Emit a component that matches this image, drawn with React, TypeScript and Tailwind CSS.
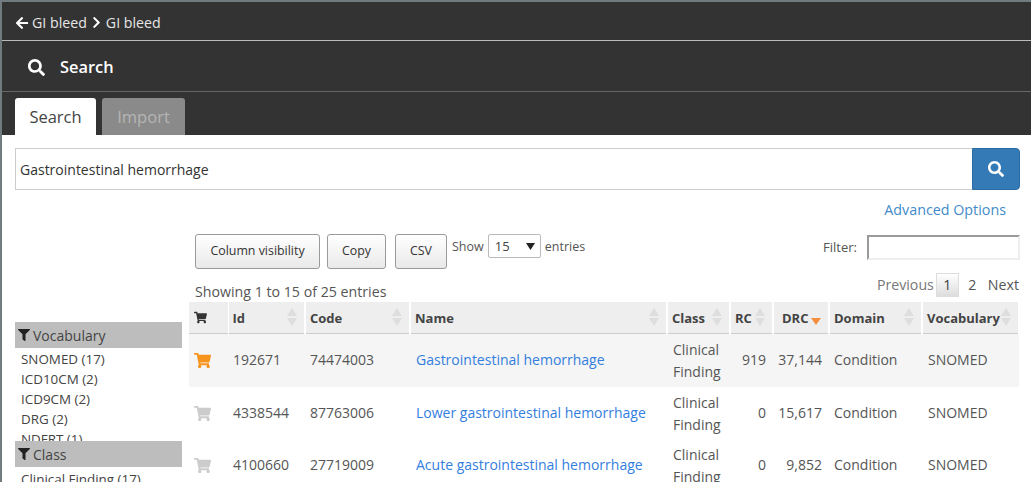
import { FaArrowLeft, FaChevronRight, FaSearch, FaFilter, FaShoppingCart } from "react-icons/fa";

function SortArrows({ active }: { active?: boolean }) {
  if (active)
    return (
      <svg width="10" height="7" viewBox="0 0 10 7" className="absolute right-[7px] top-[16px]">
        <path d="M0 0h10L5 7z" fill="#f58d3c" />
      </svg>
    );
  return (
    <svg width="10" height="18" viewBox="0 0 10 18" className="absolute right-[7px] top-[6px]">
      <path d="M5 0l5 8H0z" fill="#dedede" />
      <path d="M5 18L0 10h10z" fill="#dedede" />
    </svg>
  );
}

const cols = [
  { label: "Id", w: "w-[77px]", pad: "pl-[4px]" },
  { label: "Code", w: "w-[105px]", pad: "pl-[4px]" },
  { label: "Name", w: "w-[257px]", pad: "pl-[4px]" },
  { label: "Class", w: "w-[63px]", pad: "pl-[4px]" },
  { label: "RC", w: "w-[43px]", pad: "pl-[4px]" },
  { label: "DRC", w: "w-[56px]", pad: "pl-[8px]", active: true },
  { label: "Domain", w: "w-[93px]", pad: "pl-[4px]" },
  { label: "Vocabulary", w: "w-[97px]", pad: "pl-[4px]" },
];

const rows = [
  { id: "192671", code: "74474003", name: "Gastrointestinal hemorrhage", rc: "919", drc: "37,144", on: true, h: "h-[54px]" },
  { id: "4338544", code: "87763006", name: "Lower gastrointestinal hemorrhage", rc: "0", drc: "15,617", on: false, h: "h-[52px]" },
  { id: "4100660", code: "27719009", name: "Acute gastrointestinal hemorrhage", rc: "0", drc: "9,852", on: false, h: "h-[52px]" },
];

function Btn({ children, w }: { children: string; w: string }) {
  return (
    <button className={`${w} h-[35px] border border-[#9a9a9a] rounded-[3px] bg-gradient-to-b from-white to-[#e9e9e9] text-[12.4px] text-[#333]`}>
      {children}
    </button>
  );
}

export default function App() {
  return (
    <div
      className="w-[1031px] h-[482px] overflow-hidden bg-white border-l-2 border-t-2 border-[#6f7b7f] text-[#333] text-[14px]"
      style={{ fontFamily: '"Open Sans", sans-serif' }}
    >
      <header className="bg-[#333] text-[#e6e6e6]">
        <div className="h-[35px] flex items-center pl-[13px] pt-[3px] gap-[3px] text-[14.2px] border-b border-[#bbb] box-content">
          <FaArrowLeft className="text-white text-[14px]" />
          <span>GI bleed</span>
          <FaChevronRight className="text-white text-[13px]" />
          <span>GI bleed</span>
        </div>
        <div className="h-[51px] flex items-center pl-[26px] pt-[2px] gap-[15px] border-b border-[#666] text-white font-semibold text-[16.400px]">
          <FaSearch className="text-[17px]" />
          <span>Search</span>
        </div>
        <div className="h-[43px] flex items-end pl-[13px] gap-[6px] text-[16.500px]">
          <div className="w-[81px] h-[37px] pt-[1px] bg-white text-[#444] rounded-t-[3px] flex items-center justify-center">Search</div>
          <div className="w-[83px] h-[37px] pt-[1px] bg-[#8a8a8a] text-[#b5b5b5] rounded-t-[3px] flex items-center justify-center">Import</div>
        </div>
      </header>

      <div className="pl-[13px] pr-[11px] pt-[13px]">
        <div className="flex h-[42px]">
          <div className="flex-1 border border-[#ccc] border-r-0 flex items-center pl-[4px] text-[14px] text-[#333]">
            Gastrointestinal hemorrhage
          </div>
          <div className="w-[48px] bg-[#337ab7] rounded-r-[4px] border border-[#2e6da4] flex items-center justify-center text-white text-[16px]">
            <FaSearch />
          </div>
        </div>
        <div className="text-right pr-[14px] pt-[10px] h-[44px] text-[#428bca] text-[14.300px] leading-[20px]">Advanced Options</div>
      </div>

      <div className="flex pl-[13px]">
        <aside className="w-[167px] pt-[88px] shrink-0">
          <div className="h-[26px] bg-[#bdbdbd] flex items-center pl-[3px] gap-[3px] text-[14px] text-[#444]">
            <FaFilter className="text-[12px] text-[#222]" />
            Vocabulary
          </div>
          <ul className="h-[93px] overflow-hidden pl-[6px] pt-[1px] text-[13.400px] leading-[20px] text-[#444]">
            <li>SNOMED (17)</li>
            <li>ICD10CM (2)</li>
            <li>ICD9CM (2)</li>
            <li>DRG (2)</li>
            <li>NDFRT (1)</li>
          </ul>
          <div className="h-[26px] bg-[#bdbdbd] flex items-center pl-[3px] gap-[3px] text-[14px] text-[#444]">
            <FaFilter className="text-[12px] text-[#222]" />
            Class
          </div>
          <ul className="pl-[6px] pt-[2px] text-[13.400px] leading-[20px] text-[#444]">
            <li>Clinical Finding (17)</li>
          </ul>
        </aside>

        <main className="ml-[7px] w-[830px] shrink-0">
          <div className="flex h-[35px] pl-[6px]">
            <div className="flex">
              <Btn w="w-[125px]">Column visibility</Btn>
              <div className="w-[7px]" />
              <Btn w="w-[59px]">Copy</Btn>
              <div className="w-[9px]" />
              <Btn w="w-[52px]">CSV</Btn>
            </div>
            <div className="flex items-start gap-[4px] pl-[5px] text-[12.500px] text-[#555] leading-[24px]">
              <span className="pt-[1px]">Show</span>
              <div className="w-[53px] h-[24px] border border-[#bbb] rounded-[2px] flex items-center justify-between pl-[6px] pr-[5px] text-[#444] text-[13px]">
                <span>15</span>
                <svg width="9" height="7" viewBox="0 0 9 7"><path d="M0 0h9L4.500 7z" fill="#222" /></svg>
              </div>
              <span className="pt-[1px]">entries</span>
            </div>
            <div className="ml-auto flex items-start gap-[10px] text-[13px] text-[#555] leading-[24px]">
              <span className="pt-[1px]">Filter:</span>
              <div className="w-[153px] h-[25px] mt-[1px] -mr-[1px] border-2 border-t-[#9a9a9a] border-l-[#9a9a9a] border-r-[#eee] border-b-[#eee]" />
            </div>
          </div>

          <div className="flex h-[33px] items-end pl-[6px] text-[14.200px] text-[#555]">
            <span className="leading-[20px]">Showing 1 to 15 of 25 entries</span>
            <div className="ml-auto flex items-center h-[24px] mb-[5px] text-[#777]">
              <span className="mr-[2px]">Previous</span>
              <span className="w-[23px] h-[24px] border border-[#ddd] bg-gradient-to-b from-white to-[#ddd] flex items-center justify-center text-[#444]">1</span>
              <span className="w-[27px] text-center text-[#555]">2</span>
              <span className="text-[#555] pl-[2px]">Next</span>
            </div>
          </div>

          <table className="table-fixed border-collapse w-[830px] text-[14px]">
            <thead>
              <tr className="h-[31px] bg-[#eee] border-b border-[#ccc] text-[13px] font-bold text-[#444]">
                <th className="w-[39px] border-r border-white text-left pl-[5px] align-middle">
                  <FaShoppingCart className="text-[13px] text-[#333]" />
                </th>
                {cols.map((c) => (
                  <th key={c.label} className={`${c.w} ${c.pad} pt-[2px] relative border-r-2 border-white text-left font-bold`}>
                    {c.label}
                    <SortArrows active={c.active} />
                  </th>
                ))}
              </tr>
            </thead>
            <tbody>
              {rows.map((r) => (
                <tr key={r.id} className={`${r.h} ${r.on ? "bg-[#f5f5f5]" : "bg-white"}`}>
                  <td className="pl-[5px] align-top pt-[18px]">
                    <FaShoppingCart className={`text-[17px] ${r.on ? "text-[#f7941d]" : "text-[#ccc]"}`} />
                  </td>
                  <td className="pl-[5px] pb-[2px] text-[#555]">{r.id}</td>
                  <td className="pl-[5px] pb-[2px] text-[#555]">{r.code}</td>
                  <td className="pl-[6px] pb-[2px] text-[#337ede]">{r.name}</td>
                  <td className="pl-[6px] pt-[2px] leading-[22px] text-[#555]">Clinical Finding</td>
                  <td className="pr-[7px] pb-[2px] text-right text-[#555]">{r.rc}</td>
                  <td className="pr-[7px] pb-[2px] text-right text-[#555]">{r.drc}</td>
                  <td className="pl-[5px] pb-[2px] text-[#555]">Condition</td>
                  <td className="pl-[6px] pb-[2px] text-[#555]">SNOMED</td>
                </tr>
              ))}
            </tbody>
          </table>
        </main>
      </div>
    </div>
  );
}
